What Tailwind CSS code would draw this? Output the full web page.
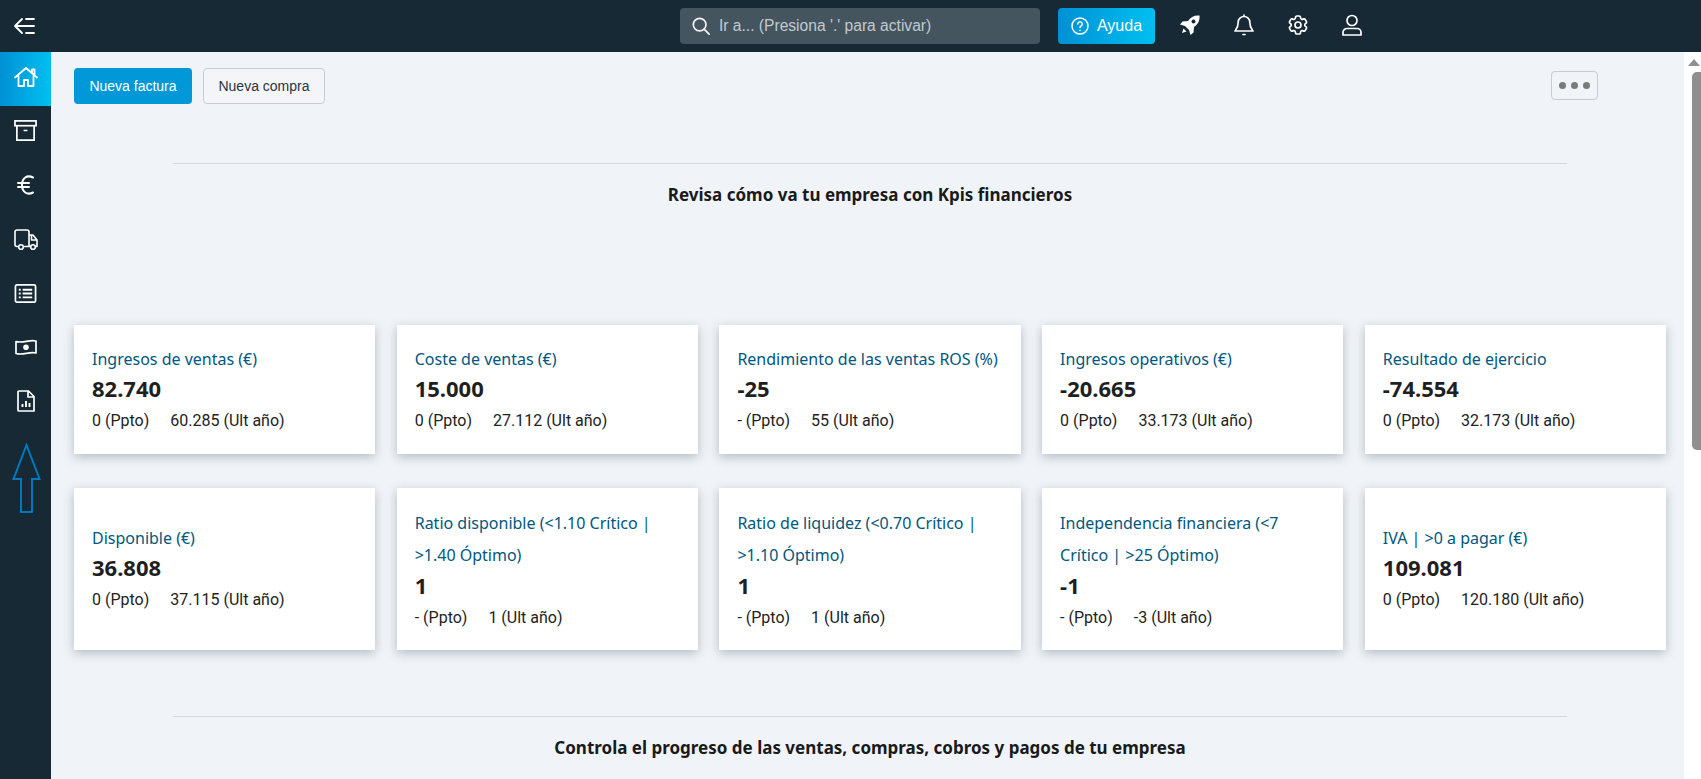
<!DOCTYPE html>
<html lang="es">
<head>
  <meta charset="UTF-8" />
  <title>Inicio</title>
  <script src="https://cdn.jsdelivr.net/npm/@tailwindcss/browser@4"></script>
</head>
<body class="h-[779px] overflow-hidden bg-[#f0f4f8] font-['Roboto',sans-serif]">

  <!-- Barra superior -->
  <header class="relative flex h-[52px] items-center bg-[#162935] text-white">
    <button class="flex w-[51px] justify-center pr-[3px]">
      <svg class="h-[24px] w-[24px]" viewBox="0 0 24 24" fill="none" stroke="currentColor" stroke-width="1.800" stroke-linecap="round" stroke-linejoin="round"><path d="M10 5l-7 7 7 7M3.500 12H22M14 5h8M14 19h8"/></svg>
    </button>
    <div class="ml-[629px] flex h-[36px] w-[360px] items-center gap-[9px] rounded-[4px] bg-[#445560] pl-[12px]">
      <svg class="h-[18px] w-[18px]" viewBox="0 0 20 20" fill="none" stroke="#f4f4f4" stroke-width="1.900" stroke-linecap="round"><circle cx="8.500" cy="8.500" r="7"/><path d="M13.500 13.500L19 19"/></svg>
      <span class="font-['Liberation_Sans',sans-serif] text-[15.600px] text-[#c3c9cd]">Ir a... (Presiona '.' para activar)</span>
    </div>
    <button class="ml-[18px] flex h-[36px] w-[97px] items-center justify-center gap-[8px] rounded-[4px] bg-gradient-to-r from-[#0090d4] to-[#00c0f0]">
      <svg class="h-[18px] w-[18px]" viewBox="0 0 18 18" fill="none" stroke="white" stroke-width="1.500" stroke-linecap="round"><circle cx="9" cy="9" r="8"/><path d="M6.800 7a2.200 2.200 0 1 1 3.400 1.900C9.400 9.400 9 9.800 9 10.600"/><path d="M9 13.300v.1"/></svg>
      <span class="font-['Liberation_Sans',sans-serif] text-[16px]">Ayuda</span>
    </button>
    <div class="ml-[23px] flex w-[186px] items-center justify-between pb-[2px]">
      <!-- cohete -->
      <svg class="h-[24px] w-[24px]" viewBox="0 0 24 24" fill="white"><path d="M21.500 2.500c-5-.5-9 1.500-11.500 5.500l-5.500.5L2 11.500l5 1.500 4 4 1.500 5 3-2.500.5-5.500c4-2.500 6-6.500 5.500-11.500zM15.500 6.500a2 2 0 1 1 0 4 2 2 0 0 1 0-4z" fill-rule="evenodd"/><path d="M5.500 15.500l3 3L4 20z"/></svg>
      <!-- campana -->
      <svg class="h-[24px] w-[24px]" viewBox="0 0 24 24" fill="none" stroke="white" stroke-width="1.700" stroke-linecap="round" stroke-linejoin="round"><path d="M12 3.500a5.800 5.800 0 0 0-5.800 5.800c0 5.200-1.700 6.700-3.200 8.700h18c-1.500-2-3.200-3.500-3.200-8.700A5.800 5.800 0 0 0 12 3.500zM12 2v1.500M11 21.500h2"/></svg>
      <!-- ajustes -->
      <svg class="h-[24px] w-[24px]" viewBox="0 0 24 24" fill="none" stroke="white" stroke-width="1.700" stroke-linejoin="round"><circle cx="12" cy="12" r="3"/><path d="M9.594 3.940c.09-.542.56-.94 1.110-.94h2.593c.55 0 1.020.398 1.110.94l.213 1.281c.063.374.313.686.645.870.074.040.147.083.220.127.325.196.72.257 1.075.124l1.217-.456a1.125 1.125 0 0 1 1.370.490l1.296 2.247a1.125 1.125 0 0 1-.26 1.431l-1.003.827c-.293.241-.438.613-.43.992a7.723 7.723 0 0 1 0 .255c-.008.378.137.75.43.991l1.004.827c.424.35.534.955.26 1.430l-1.298 2.247a1.125 1.125 0 0 1-1.369.491l-1.217-.456c-.355-.133-.75-.072-1.076.124a6.470 6.470 0 0 1-.22.128c-.331.183-.581.495-.644.869l-.213 1.281c-.09.543-.56.94-1.110.94h-2.594c-.55 0-1.019-.398-1.110-.94l-.213-1.281c-.062-.374-.312-.686-.644-.870a6.520 6.520 0 0 1-.22-.127c-.325-.196-.72-.257-1.076-.124l-1.217.456a1.125 1.125 0 0 1-1.369-.49l-1.297-2.247a1.125 1.125 0 0 1 .26-1.431l1.004-.827c.292-.24.437-.613.43-.991a6.932 6.932 0 0 1 0-.255c.007-.38-.138-.751-.43-.992l-1.004-.827a1.125 1.125 0 0 1-.26-1.430l1.297-2.247a1.125 1.125 0 0 1 1.370-.491l1.216.456c.356.133.751.072 1.076-.124.072-.044.146-.086.22-.128.332-.183.582-.495.644-.869l.214-1.280z"/></svg>
      <!-- usuario -->
      <svg class="h-[24px] w-[24px]" viewBox="0 0 24 24" fill="none" stroke="white" stroke-width="1.700" stroke-linejoin="round"><circle cx="12" cy="7.500" r="5"/><path d="M7 15.500h10a4 4 0 0 1 4 4V22H3v-2.500a4 4 0 0 1 4-4z"/></svg>
    </div>
  </header>

  <div class="flex h-[727px]">
    <!-- Menu lateral -->
    <nav class="flex w-[51px] shrink-0 flex-col bg-[#162935] text-white">
      <a class="flex h-[54px] items-center justify-center bg-gradient-to-r from-[#0090d4] to-[#00c0f0] pb-[4px]">
        <svg class="h-[24px] w-[24px]" viewBox="0 0 24 24" fill="none" stroke="white" stroke-width="1.800" stroke-linejoin="round" stroke-linecap="round"><path d="M1 12.500L12 3l11 9.500M4.500 10.500V21H10v-6h4v6h5.500V10.500M18 8V4.500h2.500v6"/></svg>
      </a>
      <a class="flex h-[54px] items-center justify-center pb-[5px]">
        <svg class="h-[23px] w-[23px]" viewBox="0 0 24 24" fill="none" stroke="white" stroke-width="1.800"><rect x="1" y="2" width="22" height="5"/><path d="M3 7v15h18V7M10 12h4"/></svg>
      </a>
      <a class="flex h-[54px] items-center justify-center pb-[4px]">
        <svg class="h-[24px] w-[24px]" viewBox="0 0 24 24" fill="none" stroke="white" stroke-width="2" stroke-linecap="round"><path d="M19 4.500C13 1.500 8 5 8 12s5 10.500 11 7.500M4 10h11M4 14h11"/></svg>
      </a>
      <a class="flex h-[54px] items-center justify-center pb-[4px]">
        <svg class="h-[24px] w-[24px]" viewBox="0 0 24 24" fill="none" stroke="white" stroke-width="1.600" stroke-linejoin="round"><path d="M4.500 19.500H3a2 2 0 0 1-2-2V5a2 2 0 0 1 2-2h10a2 2 0 0 1 2 2v14.500H9.500M15 8h4l4 5v6.500h-1.500M15 19.500h1.500M17.500 8.500V13H23"/><circle cx="7" cy="20" r="2.300"/><circle cx="19" cy="20" r="2.300"/></svg>
      </a>
      <a class="flex h-[54px] items-center justify-center pb-[4px]">
        <svg class="h-[23px] w-[23px]" viewBox="0 0 24 24" fill="none" stroke="white" stroke-width="1.800"><rect x="1.500" y="3" width="21" height="18" rx="1.500"/><path d="M9 8h10M9 12h10M9 16h10M5 8h2M5 12h2M5 16h2" stroke-width="2"/></svg>
      </a>
      <a class="flex h-[54px] items-center justify-center pb-[4px]">
        <svg class="h-[24px] w-[24px]" viewBox="0 0 24 24" fill="none" stroke="white" stroke-width="1.700" stroke-linejoin="round"><path d="M2 6.500c7 2 13-2 20-.5v12c-7-1.500-13 2.500-20 .5z"/><circle cx="12" cy="12.200" r="2.800" fill="white" stroke="none"/></svg>
      </a>
      <a class="flex h-[54px] items-center justify-center pb-[4px]">
        <svg class="h-[24px] w-[24px]" viewBox="0 0 24 24" fill="none" stroke="white" stroke-width="1.700" stroke-linejoin="round"><path d="M5 2h9.500L20 7.500V22H5a1 1 0 0 1-1-1V3a1 1 0 0 1 1-1zM14 2v6h6"/><path d="M8.500 18v-3M12 18v-6M15.500 18v-4" stroke-width="1.900"/></svg>
      </a>
      <!-- flecha -->
      <svg class="ml-[12px] mt-[13px] h-[71px] w-[29px]" viewBox="0 0 29 71" fill="none" stroke="#0078c0" stroke-width="2"><path d="M14.500 2L27.500 36H20V69H9V36H1.500z"/></svg>
    </nav>

    <!-- Contenido -->
    <main class="min-w-0 flex-1 px-[23px] pt-[16px] pr-[18px]">
      <div class="flex items-start gap-[11px]">
        <button class="h-[36px] w-[118px] rounded-[4px] bg-[#0098d6] font-['Liberation_Sans',sans-serif] text-[14px] text-white">Nueva factura</button>
        <button class="h-[36px] w-[122px] rounded-[4px] border border-[#c5ced8] bg-[#f3f5f9] font-['Liberation_Sans',sans-serif] text-[14px] text-[#2b3440]">Nueva compra</button>
        <button class="ml-[1215px] mt-[3px] flex h-[29px] w-[47px] items-center justify-center gap-[5px] rounded-[4px] border border-[#c8ccd0]">
          <span class="h-[7px] w-[7px] rounded-full bg-[#7a7a7a]"></span>
          <span class="h-[7px] w-[7px] rounded-full bg-[#7a7a7a]"></span>
          <span class="h-[7px] w-[7px] rounded-full bg-[#7a7a7a]"></span>
        </button>
      </div>

      <section class="mx-[99px] mt-[59px] border-t border-[#d5dade] pt-[20px] text-center">
        <h2 class="font-['Noto_Sans',sans-serif] text-[17px] leading-[22px] font-bold text-[#1a1a1a]">Revisa cómo va tu empresa con Kpis financieros</h2>
      </section>

      <!-- KPIs -->
      <div class="mt-[119px] grid grid-cols-5 gap-x-[21.500px] gap-y-[34px]">
        <div class="flex h-[129px] flex-col justify-center bg-white px-[18px] shadow-[0_3px_10px_rgba(60,80,100,0.35)]">
          <p class="font-['Noto_Sans',sans-serif] text-[16px] leading-[24px] text-[#00577f]">Ingresos de ventas (€)</p>
          <p class="mt-[2px] font-['Noto_Sans',sans-serif] text-[22px] leading-[30px] font-bold text-[#1f1f1f]">82.740</p>
          <p class="mt-[6px] flex gap-[21px] text-[16px] leading-[24px] text-[#222]"><span>0 (Ppto)</span><span>60.285 (Ult año)</span></p>
        </div>
        <div class="flex h-[129px] flex-col justify-center bg-white px-[18px] shadow-[0_3px_10px_rgba(60,80,100,0.35)]">
          <p class="font-['Noto_Sans',sans-serif] text-[16px] leading-[24px] text-[#00577f]">Coste de ventas (€)</p>
          <p class="mt-[2px] font-['Noto_Sans',sans-serif] text-[22px] leading-[30px] font-bold text-[#1f1f1f]">15.000</p>
          <p class="mt-[6px] flex gap-[21px] text-[16px] leading-[24px] text-[#222]"><span>0 (Ppto)</span><span>27.112 (Ult año)</span></p>
        </div>
        <div class="flex h-[129px] flex-col justify-center bg-white px-[18px] shadow-[0_3px_10px_rgba(60,80,100,0.35)]">
          <p class="whitespace-nowrap font-['Noto_Sans',sans-serif] text-[16px] leading-[24px] text-[#00577f]">Rendimiento de las ventas ROS (%)</p>
          <p class="mt-[2px] font-['Noto_Sans',sans-serif] text-[22px] leading-[30px] font-bold text-[#1f1f1f]">-25</p>
          <p class="mt-[6px] flex gap-[21px] text-[16px] leading-[24px] text-[#222]"><span>- (Ppto)</span><span>55 (Ult año)</span></p>
        </div>
        <div class="flex h-[129px] flex-col justify-center bg-white px-[18px] shadow-[0_3px_10px_rgba(60,80,100,0.35)]">
          <p class="font-['Noto_Sans',sans-serif] text-[16px] leading-[24px] text-[#00577f]">Ingresos operativos (€)</p>
          <p class="mt-[2px] font-['Noto_Sans',sans-serif] text-[22px] leading-[30px] font-bold text-[#1f1f1f]">-20.665</p>
          <p class="mt-[6px] flex gap-[21px] text-[16px] leading-[24px] text-[#222]"><span>0 (Ppto)</span><span>33.173 (Ult año)</span></p>
        </div>
        <div class="flex h-[129px] flex-col justify-center bg-white px-[18px] shadow-[0_3px_10px_rgba(60,80,100,0.35)]">
          <p class="font-['Noto_Sans',sans-serif] text-[16px] leading-[24px] text-[#00577f]">Resultado de ejercicio</p>
          <p class="mt-[2px] font-['Noto_Sans',sans-serif] text-[22px] leading-[30px] font-bold text-[#1f1f1f]">-74.554</p>
          <p class="mt-[6px] flex gap-[21px] text-[16px] leading-[24px] text-[#222]"><span>0 (Ppto)</span><span>32.173 (Ult año)</span></p>
        </div>

        <div class="flex h-[162px] flex-col justify-center bg-white px-[18px] shadow-[0_3px_10px_rgba(60,80,100,0.35)]">
          <p class="font-['Noto_Sans',sans-serif] text-[16px] leading-[24px] text-[#00577f]">Disponible (€)</p>
          <p class="mt-[2px] font-['Noto_Sans',sans-serif] text-[22px] leading-[30px] font-bold text-[#1f1f1f]">36.808</p>
          <p class="mt-[6px] flex gap-[21px] text-[16px] leading-[24px] text-[#222]"><span>0 (Ppto)</span><span>37.115 (Ult año)</span></p>
        </div>
        <div class="flex h-[162px] flex-col justify-center bg-white px-[18px] pb-[2px] shadow-[0_3px_10px_rgba(60,80,100,0.35)]">
          <p class="font-['Noto_Sans',sans-serif] text-[16px] leading-[32px] text-[#00577f]">Ratio disponible (&lt;1.10 Crítico | &gt;1.40 Óptimo)</p>
          <p class="mt-[-1px] font-['Noto_Sans',sans-serif] text-[22px] leading-[30px] font-bold text-[#1f1f1f]">1</p>
          <p class="mt-[6px] flex gap-[21px] text-[16px] leading-[24px] text-[#222]"><span>- (Ppto)</span><span>1 (Ult año)</span></p>
        </div>
        <div class="flex h-[162px] flex-col justify-center bg-white px-[18px] pb-[2px] shadow-[0_3px_10px_rgba(60,80,100,0.35)]">
          <p class="font-['Noto_Sans',sans-serif] text-[16px] leading-[32px] text-[#00577f]">Ratio de liquidez (&lt;0.70 Crítico | &gt;1.10 Óptimo)</p>
          <p class="mt-[-1px] font-['Noto_Sans',sans-serif] text-[22px] leading-[30px] font-bold text-[#1f1f1f]">1</p>
          <p class="mt-[6px] flex gap-[21px] text-[16px] leading-[24px] text-[#222]"><span>- (Ppto)</span><span>1 (Ult año)</span></p>
        </div>
        <div class="flex h-[162px] flex-col justify-center bg-white px-[18px] pb-[2px] shadow-[0_3px_10px_rgba(60,80,100,0.35)]">
          <p class="font-['Noto_Sans',sans-serif] text-[16px] leading-[32px] text-[#00577f]">Independencia financiera (&lt;7 Crítico | &gt;25 Óptimo)</p>
          <p class="mt-[-1px] font-['Noto_Sans',sans-serif] text-[22px] leading-[30px] font-bold text-[#1f1f1f]">-1</p>
          <p class="mt-[6px] flex gap-[21px] text-[16px] leading-[24px] text-[#222]"><span>- (Ppto)</span><span>-3 (Ult año)</span></p>
        </div>
        <div class="flex h-[162px] flex-col justify-center bg-white px-[18px] shadow-[0_3px_10px_rgba(60,80,100,0.35)]">
          <p class="font-['Noto_Sans',sans-serif] text-[16px] leading-[24px] text-[#00577f]">IVA | &gt;0 a pagar (€)</p>
          <p class="mt-[2px] font-['Noto_Sans',sans-serif] text-[22px] leading-[30px] font-bold text-[#1f1f1f]">109.081</p>
          <p class="mt-[6px] flex gap-[21px] text-[16px] leading-[24px] text-[#222]"><span>0 (Ppto)</span><span>120.180 (Ult año)</span></p>
        </div>
      </div>

      <section class="mx-[99px] mt-[66px] border-t border-[#d5dade] pt-[20px] text-center">
        <h2 class="font-['Noto_Sans',sans-serif] text-[17px] leading-[22px] font-bold text-[#1a1a1a]">Controla el progreso de las ventas, compras, cobros y pagos de tu empresa</h2>
      </section>
    </main>

    <!-- Barra de scroll -->
    <div class="flex w-[17px] shrink-0 flex-col items-end bg-white">
      <div class="mt-[7px] mr-[1px] h-0 w-0 border-x-[6px] border-b-[7px] border-x-transparent border-b-[#8f8f8f]"></div>
      <div class="mt-[6px] h-[378px] w-[9px] rounded-l-[5px] bg-[#8f8f8f]"></div>
    </div>
  </div>

</body>
</html>
